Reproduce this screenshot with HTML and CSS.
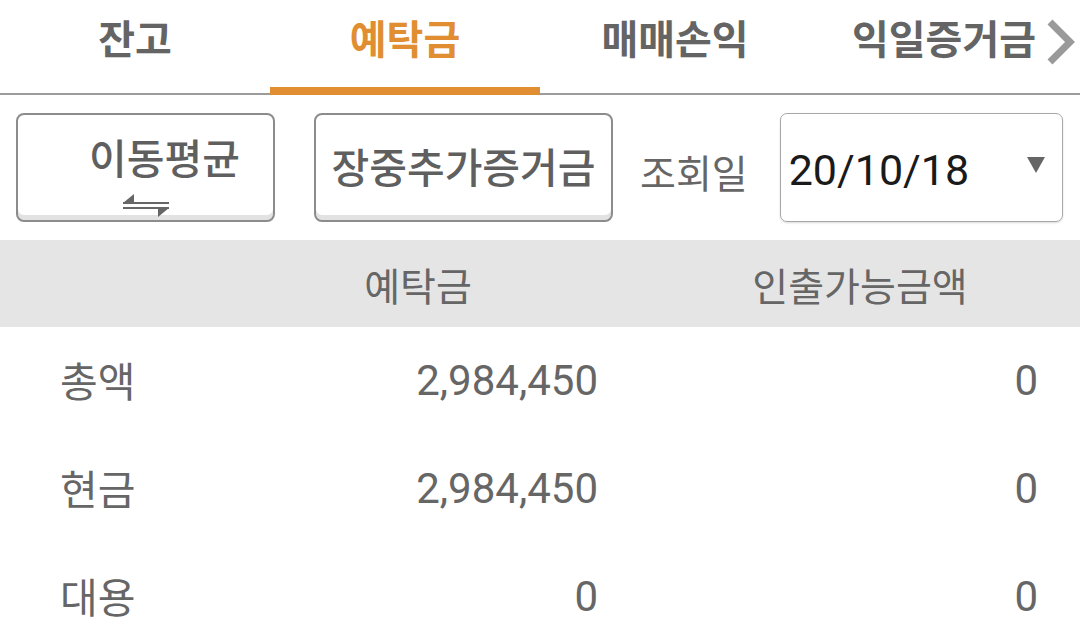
FILE: index.html
```html
<!DOCTYPE html>
<html lang="ko">
<head>
<meta charset="utf-8">
<link rel="stylesheet" href="styles.css">
</head>
<body>
<div class="page">
  <nav class="tabs">
    <div class="tab">잔고</div>
    <div class="tab active">예탁금</div>
    <div class="tab">매매손익</div>
    <div class="tab last">익일증거금
      <svg class="chev" width="32" height="46" viewBox="0 0 32 46"><polyline points="5,3 25,23 5,43" fill="none" stroke="#9a9a9a" stroke-width="7"/></svg>
    </div>
  </nav>

  <div class="toolbar">
    <button class="btn btn-ma">
      <span class="btn-label">이동평균</span>
      <svg class="swap" width="48" height="24" viewBox="0 0 48 24">
        <rect x="1" y="8" width="46" height="2" fill="#666"/>
        <polygon points="1,9 12,0 12,9" fill="#666"/>
        <rect x="1" y="13" width="46" height="2" fill="#666"/>
        <polygon points="47,14 36,14 36,23" fill="#666"/>
      </svg>
    </button>
    <button class="btn btn-margin">장중추가증거금</button>
    <span class="date-label">조회일</span>
    <div class="select">
      <span class="select-value">20/10/18</span>
      <span class="caret"></span>
    </div>
  </div>

  <div class="table">
    <div class="row head">
      <div class="cell"></div>
      <div class="cell c1">예탁금</div>
      <div class="cell c2">인출가능금액</div>
    </div>
    <div class="row">
      <div class="cell label">총액</div>
      <div class="cell c1 num">2,984,450</div>
      <div class="cell c2 num">0</div>
    </div>
    <div class="row">
      <div class="cell label">현금</div>
      <div class="cell c1 num">2,984,450</div>
      <div class="cell c2 num">0</div>
    </div>
    <div class="row">
      <div class="cell label">대용</div>
      <div class="cell c1 num">0</div>
      <div class="cell c2 num">0</div>
    </div>
  </div>
</div>
</body>
</html>
```

FILE: styles.css
```css
* { box-sizing: border-box; }
html, body { margin: 0; padding: 0; background: #fff; }
body {
  width: 1080px;
  height: 640px;
  overflow: hidden;
  font-family: Roboto, "Noto Sans CJK KR", sans-serif;
  color: #666;
}
.page { width: 1080px; }

/* Tabs */
.tabs {
  display: flex;
  align-items: flex-start;
  height: 95px;
  border-bottom: 2px solid #9c9c9c;
}
.tab {
  position: relative;
  width: 270px;
  height: 93px;
  padding-top: 11px;
  text-align: center;
  font-family: "Noto Sans CJK KR", sans-serif;
  font-weight: 700;
  font-size: 40px;
  line-height: 52px;
  color: #646464;
}
.tab.active {
  color: #e08e31;
  height: 95px;
  margin-bottom: -2px;
  border-bottom: 8px solid #e08e31;
}
.tab.last { padding-right: 2px; }
.chev {
  position: absolute;
  right: 3px;
  top: 19px;
}

/* Toolbar */
.toolbar {
  display: flex;
  align-items: center;
  height: 109px;
  margin-top: 18px;
  padding-left: 16px;
}
.btn {
  height: 109px;
  background: #fff;
  border: 2px solid #8c8c8c;
  border-radius: 8px;
  box-shadow: inset 0 -5px 0 #e2e2e2;
  font-family: "Noto Sans CJK KR", sans-serif;
  font-weight: 500;
  font-size: 41px;
  color: #5f5f5f;
  padding: 0;
}
.btn-ma {
  width: 259px;
  display: flex;
  flex-direction: column;
  align-items: center;
  padding-top: 16px;
}
.btn-label {
  line-height: 50px;
  padding-left: 38px;
}
.swap { margin-top: 13px; }
.btn-margin {
  width: 299px;
  margin-left: 39px;
  line-height: 50px;
  padding-bottom: 6px;
}
.date-label {
  margin-left: 27px;
  font-family: "Noto Sans CJK KR", sans-serif;
  font-size: 39px;
  line-height: 50px;
  color: #666;
  padding-top: 6px;
}
.select {
  margin-left: 32px;
  width: 283px;
  height: 109px;
  border: 1px solid #a8a8a8;
  border-radius: 7px;
  box-shadow: 0 1px 2px rgba(0,0,0,0.15);
  display: flex;
  align-items: center;
  justify-content: space-between;
  padding: 4px 17px 0 8px;
}
.select-value {
  font-family: Roboto, sans-serif;
  font-size: 43px;
  color: #1a1a1a;
}
.caret {
  width: 0;
  height: 0;
  border-left: 9px solid transparent;
  border-right: 9px solid transparent;
  border-top: 16px solid #666;
  margin-bottom: 10px;
}

/* Table */
.table { margin-top: 18px; }
.row {
  display: grid;
  grid-template-columns: 178px 360px 440px;
  padding-left: 60px;
  height: 108px;
  align-items: center;
  font-size: 40px;
}
.row.head {
  height: 87px;
  background: #e5e5e5;
  font-family: "Noto Sans CJK KR", sans-serif;
  font-size: 39px;
}
.row.head .c1 { text-align: center; }
.row.head .c2 { text-align: center; padding-left: 84px; }
.cell { color: #666; }
.label {
  font-family: "Noto Sans CJK KR", sans-serif;
  font-size: 41px;
  padding-bottom: 4px;
}
.num {
  font-family: Roboto, sans-serif;
  font-size: 42px;
  text-align: right;
  padding-bottom: 2px;
}
```
